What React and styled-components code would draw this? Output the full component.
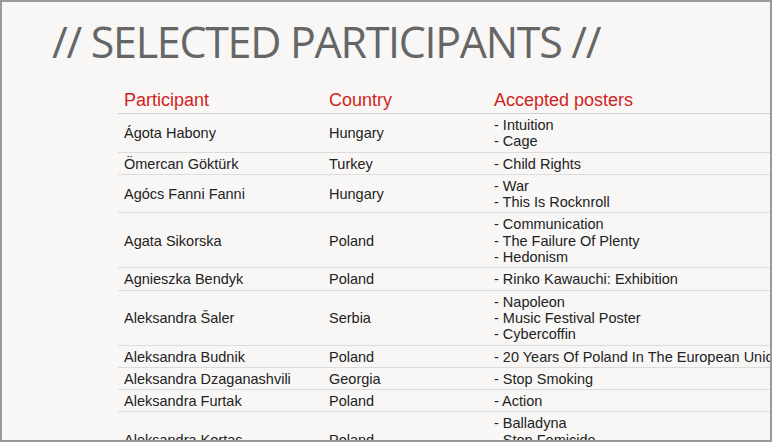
import React from "react";
import styled, { createGlobalStyle } from "styled-components";

const GlobalStyle = createGlobalStyle`
* {
  box-sizing: border-box;
  margin: 0;
  padding: 0;
}
body {
  background: #f8f7f5;
}
`

const Frame = styled.div`
  width: 772px;
  height: 442px;
  border: 2px solid #9a9a9a;
  background: #f8f7f5;
  overflow: hidden;
`

const Title = styled.h1`
  font-family: "Open Sans", sans-serif;
  font-weight: 400;
  font-size: 43px;
  line-height: 1;
  color: #666666;
  padding: 18px 0 0 50px;
  white-space: nowrap;
  letter-spacing: -1.3px;
`

const Table = styled.table`
  margin: 24px 0 0 116px;
  width: 720px;
  border-collapse: collapse;
  font-family: "Liberation Sans", Arial, sans-serif;
  table-layout: fixed;
`

const Th = styled.th`
  width: ${p => p.w || "auto"};
  text-align: left;
  font-weight: 400;
  font-size: 18px;
  line-height: 20px;
  color: #d11f1f;
  padding: 3px 6px 3px;
  border-bottom: 1px solid #cfcfcf;
`

const Td = styled.td`
  font-size: 14.5px;
  line-height: 16.3px;
  color: #222;
  padding: 3px 6px ${p => (p.$more ? "18px" : "2px")};
  border-bottom: 1px solid #dcdcdc;
  vertical-align: middle;
  white-space: nowrap;
`

const rows = [
  ["Ágota Habony", "Hungary", ["Intuition", "Cage"]],
  ["Ömercan Göktürk", "Turkey", ["Child Rights"]],
  ["Agócs Fanni Fanni", "Hungary", ["War", "This Is Rocknroll"]],
  ["Agata Sikorska", "Poland", ["Communication", "The Failure Of Plenty", "Hedonism"]],
  ["Agnieszka Bendyk", "Poland", ["Rinko Kawauchi: Exhibition"]],
  ["Aleksandra Šaler", "Serbia", ["Napoleon", "Music Festival Poster", "Cybercoffin"]],
  ["Aleksandra Budnik", "Poland", ["20 Years Of Poland In The European Union"]],
  ["Aleksandra Dzaganashvili", "Georgia", ["Stop Smoking"]],
  ["Aleksandra Furtak", "Poland", ["Action"]],
  ["Aleksandra Kortas", "Poland", ["Balladyna", "Stop Femicide"], true],
]

function App() {
  return (
    <Frame>
      <GlobalStyle />
      <Title>// SELECTED PARTICIPANTS //</Title>
      <Table>
        <thead>
          <tr>
            <Th w="205px">Participant</Th>
            <Th w="165px">Country</Th>
            <Th>Accepted posters</Th>
          </tr>
        </thead>
        <tbody>
          {rows.map(r => (
            <tr key={r[0]}>
              <Td>{r[0]}</Td>
              <Td>{r[1]}</Td>
              <Td $more={r[3]}>
                {r[2].map(p => <div key={p}>- {p}</div>)}
              </Td>
            </tr>
          ))}
        </tbody>
      </Table>
    </Frame>
  )
}

export default App;
